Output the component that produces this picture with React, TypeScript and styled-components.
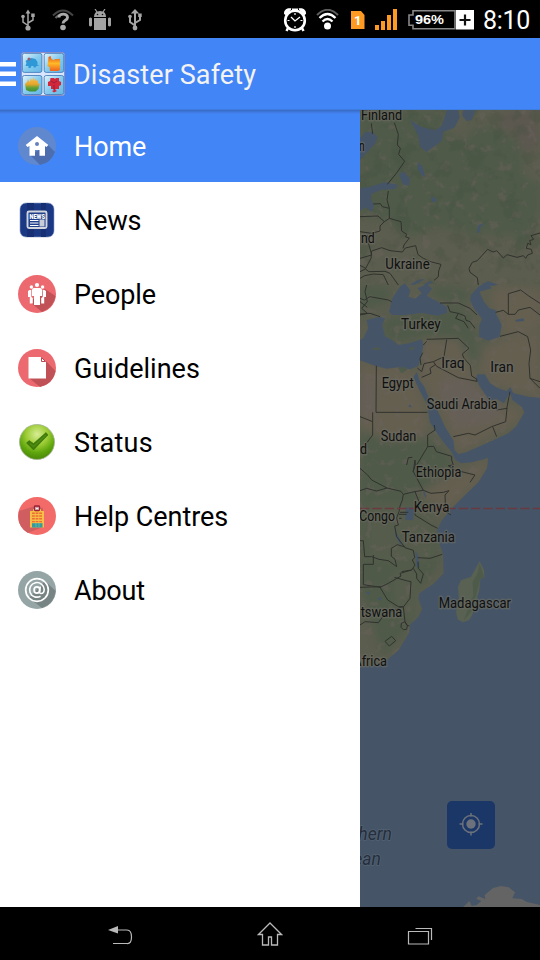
import React from "react";
import styled, { createGlobalStyle } from "styled-components";

const GlobalStyle = createGlobalStyle`
  * { box-sizing: border-box; }
  body { margin: 0; background: #000; font-family: Roboto, "Liberation Sans", sans-serif; }
  svg { display: block; }
`;

const Screen = styled.div`
  width: 540px;
  height: 960px;
  display: flex;
  flex-direction: column;
  overflow: hidden;
  background: #000;
`;

const StatusBar = styled.header`
  height: 38px;
  flex: none;
  display: flex;
  justify-content: space-between;
  align-items: center;
  background: #000;
`;

const StatusGroup = styled.div<{ $left?: number; $right?: number }>`
  display: flex;
  align-items: center;
  padding-top: 1px;
  padding-left: ${(p) => p.$left ?? 0}px;
  padding-right: ${(p) => p.$right ?? 0}px;
`;

const StatusIcon = styled.svg<{ $gap?: number }>`
  flex: none;
  margin-left: ${(p) => p.$gap ?? 0}px;
`;

const Clock = styled.span`
  width: 47px;
  margin-left: 9px;
  padding-top: 2px;
  font-size: 25px;
  line-height: 35px;
  letter-spacing: -0.3px;
  color: #fff;
  white-space: nowrap;
`;

const AppBar = styled.div`
  height: 72px;
  flex: none;
  display: flex;
  align-items: center;
  background: #4285f6;
  border-bottom: 1px solid #3f7ce0;
`;

const Title = styled.h1`
  margin: 2px 0 0 8px;
  font-size: 27px;
  line-height: 32px;
  font-weight: 400;
  letter-spacing: 0.1px;
  color: #f3f3f3;
  white-space: nowrap;
`;

const Body = styled.main`
  height: 797px;
  flex: none;
  display: flex;
`;

const Drawer = styled.nav`
  width: 360px;
  flex: none;
  display: flex;
  flex-direction: column;
  gap: 2px;
  background: #fff;
`;

const DrawerItem = styled.a<{ $active?: boolean }>`
  height: 72px;
  display: flex;
  align-items: center;
  gap: 18px;
  padding-left: 18px;
  background: ${(p) => (p.$active ? "linear-gradient(#3568c0 0, #4079dd 2px, #4285f6 4px)" : "#fff")};
  color: ${(p) => (p.$active ? "#fff" : "#000")};
`;

const ItemLabel = styled.span<{ $spacing?: number }>`
  padding-top: 1px;
  font-size: 27px;
  line-height: 34px;
  letter-spacing: ${(p) => p.$spacing ?? -0.1}px;
  white-space: nowrap;
`;

const MapPane = styled.section`
  position: relative;
  width: 180px;
  overflow: hidden;
  background: #455567;
`;

const LocateButton = styled.button`
  position: absolute;
  left: 87px;
  top: 691px;
  width: 48px;
  height: 48px;
  padding: 0;
  display: grid;
  place-items: center;
  border: 0;
  border-radius: 5px;
  background: #1b3768;
`;

const NavBar = styled.footer`
  height: 53px;
  flex: none;
  display: flex;
  align-items: center;
  justify-content: space-between;
  padding: 0 107px;
  background: #000;
`;

const Usb = ({ gap, big }: { gap?: number; big?: boolean }) => (
  <StatusIcon $gap={gap} width="14" height="22" viewBox="0 0 14 22" fill="none" stroke="#a5a5a5" strokeWidth={big ? 2 : 1.5}>
    <path d="M7 3V18M7 16.500 2 13V7.500M7 14l5-3V6.500" />
    <path d={big ? "M7 0 2.800 4.500h8.400z" : "M7 .500 4.500 4.500h5z"} fill="#a5a5a5" stroke="none" />
    <circle cx="7" cy="19" r={big ? 2.4 : 2.6} fill="#a5a5a5" stroke="none" />
    <circle cx="2" cy="7.500" r="1.800" fill="#a5a5a5" stroke="none" />
    <path d="M10.200 4.500h3.500v3.500h-3.500z" fill="#a5a5a5" stroke="none" />
  </StatusIcon>
);

const WifiUnknown = () => (
  <StatusIcon $gap={17} width="22" height="22" viewBox="0 0 22 22" fill="none">
    <path d="M1 6.500Q11-3.500 21 6.500" stroke="#454545" strokeWidth="2" />
    <path d="M3.500 9Q6 6 8.500 5.500" stroke="#666" strokeWidth="2" />
    <path d="M7 8.500c0-4.500 8.500-4.500 8.500 0 0 3-4.500 2.500-4.500 6" stroke="#aaa" strokeWidth="2.900" />
    <circle cx="11" cy="18.500" r="2.800" fill="#aaa" />
  </StatusIcon>
);

const AndroidIcon = () => (
  <StatusIcon $gap={15} width="22" height="22" viewBox="0 0 22 22" fill="#a3a3a3">
    <path d="M5 8q0-6 6-6t6 6z" />
    <path d="m6 0 2 3M16 0l-2 3" stroke="#a3a3a3" strokeWidth="1.200" />
    <path d="M5 9h12v12H5zM0 9.500q1.500-2 3 0v7q-1.500 2-3 0zM19 9.500q1.500-2 3 0v7q-1.500 2-3 0z" />
    <circle cx="8.500" cy="5.500" r=".8" fill="#111" />
    <circle cx="13.500" cy="5.500" r=".8" fill="#111" />
  </StatusIcon>
);

const AlarmIcon = () => (
  <StatusIcon width="24" height="24" viewBox="0 0 24 24" fill="none" stroke="#fff">
    <circle cx="12" cy="12.500" r="9.800" strokeWidth="2.600" />
    <path d="M1.500 6Q1 0 8 .800L3 7zM22.500 6Q23 0 16 .800L21 7z" fill="#fff" />
    <path d="m5 20-1.500 3M19 20l1.500 3M9 1.800h6" strokeWidth="2.500" />
    <path d="m8 9 4 4 5-4" strokeWidth="1.300" />
    <path d="M12 5v2M12 18v2M4.500 12.500h2M17.500 12.500h2" strokeWidth="1.200" />
  </StatusIcon>
);

const WifiIcon = () => (
  <StatusIcon $gap={9} width="23" height="22" viewBox="0 0 23 22" fill="none" stroke="#fff">
    <path d="M1 6Q11.500-4.500 22 6" stroke="#5d5d5d" strokeWidth="2" />
    <path d="M3.500 9Q11.500 1 19.500 9" strokeWidth="2.300" />
    <path d="M6.500 12.500Q11.500 7.500 16.500 12.500" strokeWidth="2.300" />
    <circle cx="11.500" cy="17" r="3.500" fill="#fff" stroke="none" />
  </StatusIcon>
);

const SimIcon = () => (
  <StatusIcon $gap={12} width="14" height="18" viewBox="0 0 14 18">
    <path d="M0 0h10l3.500 4v14H0z" fill="#fe9a24" />
    <text x="6.700" y="13.500" textAnchor="middle" fontSize="13" fontWeight="700" fontFamily="Roboto" fill="#fff">1</text>
  </StatusIcon>
);

const SignalIcon = () => (
  <StatusIcon $gap={10} width="23" height="21" viewBox="0 0 23 21" fill="#fe9a24">
    <path d="M0 16h4v5H0zM6 12h4v9H6zM12 6h4v15h-4zM18 0h4v21h-4z" />
  </StatusIcon>
);

const BatteryIcon = () => (
  <StatusIcon $gap={10} width="66" height="20" viewBox="0 0 66 20">
    <path d="M5 .800h42v18H5v-3.500H1V5h4z" fill="#000" stroke="#888" strokeWidth="1.600" />
    <path d="M48 0h18v19.500H48z" fill="#fff" />
    <path d="M57 4.500v11M51.500 10h11" stroke="#111" strokeWidth="2.200" />
    <text x="7" y="14" fontFamily="Liberation Sans" fontSize="13" fontWeight="700" textLength="29" lengthAdjust="spacingAndGlyphs" fill="#fff">96%</text>
  </StatusIcon>
);

const MenuIcon = () => (
  <svg width="16" height="26" viewBox="0 0 16 26" fill="#fff">
    <path d="M0 1h16v4.500H0zM0 10.500h16V15H0zM0 20.500h16V25H0z" />
  </svg>
);

const AppLogo = styled.svg`
  margin: 0 0 0 5px;
  flex: none;
`;

const Logo = () => (
  <AppLogo width="44" height="44" viewBox="0 0 44 44">
    <defs>
      <linearGradient id="tile" x1="0" y1="0" x2="1" y2="1">
        <stop offset="0" stopColor="#e2f4fa" />
        <stop offset=".5" stopColor="#87cbed" />
        <stop offset="1" stopColor="#63b6e5" />
      </linearGradient>
      <linearGradient id="grass" x1="0" y1="0" x2="0" y2="1">
        <stop offset="0" stopColor="#f2c35b" />
        <stop offset=".5" stopColor="#e8a52b" />
        <stop offset=".75" stopColor="#5da037" />
        <stop offset="1" stopColor="#3f9139" />
      </linearGradient>
      <linearGradient id="fire" x1="0" y1="0" x2="0" y2="1">
        <stop offset="0" stopColor="#e4521c" />
        <stop offset=".5" stopColor="#ffb928" />
        <stop offset="1" stopColor="#ef6320" />
      </linearGradient>
    </defs>
    <rect x=".5" y=".5" width="43" height="43" rx="2.500" fill="#d9e6fb" stroke="#8d8fc4" />
    <g fill="url(#tile)" stroke="#3d74b8" strokeWidth=".8">
      <rect x="1.400" y="1.400" width="19.500" height="19" rx="2" />
      <rect x="23.200" y="1.400" width="19.500" height="19" rx="2" />
      <rect x="1.400" y="23.500" width="19.500" height="19" rx="2" />
      <rect x="23.200" y="23.500" width="19.500" height="19" rx="2" />
    </g>
    <path d="m4.500 14 1-3-1-2 3-2 3-1 4 1 2 3v3l2 1h-3l-1 1.500h-2V14h-2l-1 2H7.500v-2z" fill="#2f98d6" />
    <circle cx="8" cy="7" r="1.500" fill="#a45870" />
    <path d="m27 10 .5-5 2-1 1 3 2 1 2-1h4l.5-1v12l-2 1h-8l-.5-4-2-1z" fill="url(#fire)" />
    <path d="m4 32 2-2 1-3 1.500 3L10 26l1 3 2-4v4l2-3v3l2-1v3l1.500 1-1 5-3 2.500h-6L5 38z" fill="url(#grass)" />
    <path d="m27 30 2-1 .5-3H33l1 1 1-1h3v3l2 1v3l-2 1v3h-3.500v1l1.500 1-3 1.500-2-1.500 2-1-.5-1H30v-3h-3z" fill="#d2263b" />
    <path d="m30 29 3 2 3-2M33 33v5" stroke="#861b38" strokeWidth=".8" fill="none" />
  </AppLogo>
);

const HomeBadge = () => (
  <svg width="38" height="38" viewBox="0 0 38 38">
    <circle cx="19" cy="19" r="19" fill="#6088cf" />
    <path d="M30 18 37 25Q33 36 22 38L12 28z" fill="#4c6eaf" />
    <path d="m19 9 11.300 9-1.800 2-1.500-1v9.700h-5.500V23h-4.500v5.700h-5.500V19L9.500 20l-1.800-2z" fill="#fff" />
    <circle cx="19" cy="17" r="2" fill="#6382bc" />
  </svg>
);

const NewsBadge = () => (
  <svg width="38" height="38" viewBox="0 0 38 38">
    <rect x="2" y="2" width="34" height="34" rx="6" fill="#1b3885" stroke="#8a9ac0" strokeWidth=".6" />
    <path d="M9 2h7v34H9zM23 2h5v34h-5z" fill="#173074" />
    <rect x="9.500" y="10.500" width="19" height="16.500" rx="1.500" fill="#213f8b" stroke="#d2d5dc" strokeWidth="1.900" />
    <text x="11.500" y="17.500" fontSize="6.500" fontWeight="900" fontFamily="Roboto" textLength="15.500" lengthAdjust="spacingAndGlyphs" fill="#fff">NEWS</text>
    <path d="M12 19.500h8.500M12 22h8.500M12 24.500h8.500" stroke="#fff" strokeWidth="1.100" />
    <path d="M21.500 18.500h5v7h-5z" fill="#c8ccd6" />
  </svg>
);

const PeopleBadge = () => (
  <svg width="38" height="38" viewBox="0 0 38 38">
    <circle cx="19" cy="19" r="19" fill="#ed6970" />
    <path d="M27 14 37.500 21Q36 32 24 37L12 27z" fill="#c05257" />
    <g fill="#fff">
      <circle cx="19" cy="10" r="2.100" />
      <circle cx="13.400" cy="12" r="1.700" />
      <circle cx="24.600" cy="12" r="1.700" />
      <path d="M16 13h6q2 0 2 2v6h-2v9h-6v-9h-2v-6q0-2 2-2z" />
      <path d="M11.500 15h1.800V22l1.500 1v5.500h-3V22H10v-6zM26.500 15h-1.800V22l-1.500 1v5.500h3V22H28v-6z" />
    </g>
  </svg>
);

const GuidelinesBadge = () => (
  <svg width="38" height="38" viewBox="0 0 38 38">
    <circle cx="19" cy="19" r="19" fill="#ed6970" />
    <path d="m28 12 9.500 10Q35 35 22 38L11 29z" fill="#c05257" />
    <path d="M10.500 8H23l5 5v16.500H10.500z" fill="#fff" />
    <path d="M23.500 8.500v4h4z" fill="#fff" stroke="#b9484f" strokeWidth="1" />
  </svg>
);

const StatusBadge = () => (
  <svg width="38" height="38" viewBox="0 0 38 38">
    <defs>
      <radialGradient id="glossy" cx=".5" cy=".28" r=".7">
        <stop offset="0" stopColor="#d7ed94" />
        <stop offset=".45" stopColor="#9bcb34" />
        <stop offset=".75" stopColor="#5fa60d" />
        <stop offset="1" stopColor="#4c8b08" />
      </radialGradient>
    </defs>
    <circle cx="19" cy="19" r="17.500" fill="url(#glossy)" stroke="#a3b295" strokeWidth=".8" />
    <path d="m8.500 20 2.500-2.500 4.500 3L28 9.500l2 2.500-14.500 15z" fill="#3f7b0a" stroke="#346b08" strokeWidth=".5" />
    <path d="m12 20.500 3.500 3L28 12" fill="none" stroke="#4f8c13" strokeWidth="1.500" />
  </svg>
);

const HelpBadge = () => (
  <svg width="38" height="38" viewBox="0 0 38 38">
    <circle cx="19" cy="19" r="19" fill="#f36b69" />
    <path d="M17 9 1 14Q-2 29 10 36L25 30V11z" fill="#d05e60" />
    <path d="M12 14h3v-2h8v2h3v16.500H12z" fill="#f5bf45" />
    <path d="M14 16.200h10M14 19h10M14 21.800h10M14 24.600h10" stroke="#ee6c35" strokeWidth="1.400" strokeDasharray="2.800 .8" />
    <path d="M14 26.200h10.500v4.300H14z" fill="#319b9d" />
    <path d="M18 26v4M21 26v4" stroke="#79b8a6" strokeWidth=".8" />
    <rect x="16.500" y="9" width="5" height="4.600" rx=".8" fill="#b48286" stroke="#9f2133" strokeWidth="1.300" />
    <path d="M18 10.300v2.400M20 10.300v2.400M18 11.500h2" stroke="#fff" strokeWidth=".8" />
  </svg>
);

const AboutBadge = () => (
  <svg width="38" height="38" viewBox="0 0 38 38">
    <circle cx="19" cy="19" r="19" fill="#95a5a6" />
    <path d="m27 10 10.700 10Q36 33 24 37L11 27z" fill="#778484" />
    <circle cx="19" cy="19" r="11.300" fill="none" stroke="#fff" strokeWidth="1.700" />
    <path d="M22.500 25.200A7.300 7.300 0 1 1 26.200 18.500q-.3 4-3 4-2 0-1.600-2.500l.7-4.500" fill="none" stroke="#fff" strokeWidth="1.600" />
    <ellipse cx="18.900" cy="19" rx="2.800" ry="3.200" fill="none" stroke="#fff" strokeWidth="1.700" />
  </svg>
);

const LAND =
  "M15 15H555V878L520 875 475 864 466 845 455 858 430 850 405 835 390 808 367 808 363 820 373 842 392 870 403 888 425 882 447 895 464 864 472 885 500 905 508 922 484 964 460 985 415 1006 335 1041 310 1048 298 1035 296 1007 270 965 247 915 222 880 207 843 193 825 186 800 175 816 190 850 217 900 224 950 244 982 268 1015 289 1040 302 1065 318 1075 352 1072 400 1059 396 1090 370 1132 330 1170 288 1212 260 1247 246 1277 251 1310 264 1348 266 1405 235 1437 193 1465 190 1480 201 1512 190 1535 164 1560 163 1582 131 1635 96 1665 60 1681 15 1686Z";

const WATER = [
  "M165 45 200 66 240 76 260 62 275 15H310L314 38 298 68 265 80 260 108 230 130 215 141 195 125 190 92Z",
  "M325 15H362L350 45 335 48 322 33Z",
  "M15 100 30 82 50 80 68 95 62 114 40 138 15 165Z",
  "M132 207 145 200 165 220 162 243 143 238Z",
  "M188 172 202 183 211 216 199 211 188 191Z",
  "M15 250 45 245 90 232 128 239 122 252 80 254 50 266 47 282 58 300 50 320 32 307 15 318Z",
  "M228 275 242 278 244 291 232 291Z",
  "M365 384 370 360 391 354 376 366 374 382Z",
  "M102 620 112 580 136 544 150 535 166 556 160 575 180 581 200 565 188 550 217 538 231 551 215 572 241 586 276 606 276 624 248 632 200 624 151 630 111 630Z",
  "M165 539 190 524 210 522 179 539ZM206 538 225 528 236 532 214 542Z",
  "M348 569 370 545 395 532 410 550 373 560 387 590 402 609 422 616 424 629 440 659 434 695 400 707 372 695 373 661 381 642 360 615 345 585Z",
  "M15 705 25 700 40 669 35 645 75 635 90 640 82 660 90 694 111 705 130 720 162 715 200 703 205 720 200 751 190 783 165 793 130 787 95 791 60 782 15 766Z",
  "M153 1207 178 1208 174 1246 150 1244Z",
  "M120 1265 125 1285 141 1315 136 1319 120 1290ZM181 1338 189 1350 194 1387 184 1386Z",
  "M205 1152 214 1172 212 1180 205 1165ZM32 1460 46 1462 40 1471ZM66 1480 81 1477 76 1488Z",
  "M480 645 505 640 508 648 484 650ZM382 536 400 529 430 539 410 543Z",
  "M430 1048h8v4h-8ZM160 905l5-8 5 10Z",
];

const GREEN = [
  "M15 15H255L262 75 330 110 350 72 400 65 455 85 500 130 505 210 555 240V310L500 440 475 385 430 395 400 380 350 397 310 370 240 368 160 395 110 350 15 330Z",
  "M15 540 100 545 110 565 90 600 50 600 35 640 15 620Z",
  "M80 645 160 625 230 630 310 605 355 635 345 700 300 705 220 695 120 715 90 690Z",
  "M235 540 340 550 350 575 310 600 230 576Z",
  "M310 665 365 685 430 700 410 724 350 700 375 740 360 782 325 730Z",
  "M15 980 130 1010 220 1000 300 1065 230 1140 180 1210 245 1260 255 1380 190 1460 190 1530 85 1660 50 1550 15 1450Z",
];

const SAND = [
  "M15 766 60 782 130 787 180 805 223 950 200 1000 100 1010 15 970Z",
  "M205 700 310 700 340 770 365 830 400 890 505 915 490 950 310 1045 240 895 195 830Z",
  "M395 715 520 690 555 680V875L475 860 400 830 370 790Z",
  "M420 545 555 555V670L490 690 435 690 440 630 405 595Z",
  "M260 1130 398 1060 390 1110 290 1210 240 1220 190 1160Z",
];

const BORDERS = [
  "M118 53 130 88 127 120 136 130 131 148 149 169 124 205 97 238M49 55 53 87",
  "M100 258 96 285 103 310 103 340 138 350 140 378 155 388 152 396 163 399 147 420 144 430",
  "M55 297 76 296 82 305 103 310M15 335 69 333 88 350 103 340M88 350 75 363 75 378 50 385 15 380M15 460 50 450 42 420 35 405 38 390",
  "M50 438 80 428 105 437 142 441 151 429 182 422 189 449 205 460 230 471 258 478 251 498 250 515 237 526M50 438 48 460 31 492 42 500 90 499 105 505 130 540M31 492 15 500M15 520 29 512 55 507 85 509 100 540M15 481 32 490",
  "M370 540 367 518 345 502 342 490 352 472 367 467 398 433 414 441 425 437 445 459 456 449 486 457 505 452 512 460 518 450 532 445 529 433 514 430 518 415 528 419 524 407 536 403 528 392 555 384",
  "M15 580 28 585 45 575 100 585 110 590M35 540 30 560 37 590 20 610 37 625 15 630M15 627 45 625 75 635M37 607 15 590",
  "M255 594 310 594 345 610 366 630M278 601 285 620 310 625 302 640 327 650 340 670M310 625 330 633 333 646 345 650 360 670",
  "M460 628 460 566 497 555 520 572 555 595M422 622 445 616 460 628 480 628 490 615 525 607 555 630M435 694 490 680 518 695 527 735 522 775 525 820 555 830M525 820 555 850",
  "M215 703 310 700 342 730 322 747 327 760 346 781 350 813 365 822 366 830M275 704 267 755 235 770 207 776 200 800 187 789M235 770 245 784 310 818 366 829M205 720 215 709M203 743 195 760 198 780M200 817 228 805 225 790 242 778",
  "M64 782 63 922H217M53 922V950L15 935M53 950 53 990 34 1015M295 995 340 985 360 990 410 965 452 950 456 910 425 915M413 965 425 995M455 912 462 875 465 860",
  "M185 1080 218 1025 236 1024 244 1040 290 1054 290 1065M218 1025 218 990 240 975 238 960M155 1080 160 1058 172 1057",
  "M15 1090 38 1110 50 1125 96 1149 138 1159 145 1168 178 1160 205 1156 175 1100 180 1065M15 1157 35 1150 65 1158 96 1149M180 1065 181 1080 174 1100M205 1156 228 1165 265 1162 282 1157",
  "M290 1065 295 1080 280 1082M280 1082 300 1095 360 1110 345 1132",
  "M282 1157 270 1170 272 1220 288 1230M180 1160 192 1190 180 1215 180 1230 228 1260 248 1270M145 1168 142 1185 135 1203 132 1220 125 1239 130 1260 119 1263M132 1228H155M135 1222H160M132 1240H140",
  "M119 1263 125 1295 150 1328 175 1336 179 1358 172 1365 180 1380 170 1395 140 1400",
  "M15 1307H25L29 1355H50L72 1363 100 1367 125 1385 120 1363 109 1354V1330L127 1319 150 1326M25 1378V1439L77 1447M25 1378H55V1350",
  "M188 1358 225 1360 262 1348M175 1390 185 1407V1420L197 1435 205 1407 190 1390 189 1370M170 1395 135 1405 138 1413 100 1435 75 1447M15 1447 77 1445M75 1447 98 1485 130 1505 145 1506 165 1480 168 1430 158 1428 118 1417M145 1506 150 1550 155 1560 163 1563M15 1560 30 1550 70 1553 85 1533 108 1520 143 1504",
  "M139 1555 150 1550 157 1562 155 1573 145 1574 138 1567ZM90 1609 110 1594 122 1607 103 1623Z",
];

interface MapLabel {
  text: string;
  x: number;
  y: number;
  w: number;
}

const LABELS: MapLabel[] = [
  { text: "Finland", x: 18, y: 45, w: 123 },
  { text: "n", x: 12, y: 137, w: 17 },
  { text: "nd", x: 18, y: 414, w: 41 },
  { text: "Ukraine", x: 91, y: 492, w: 133 },
  { text: "Turkey", x: 138, y: 672, w: 119 },
  { text: "Iraq", x: 259, y: 789, w: 70 },
  { text: "Iran", x: 406, y: 801, w: 70 },
  { text: "Egypt", x: 80, y: 848, w: 96 },
  { text: "Saudi Arabia", x: 215, y: 911, w: 213 },
  { text: "Sudan", x: 77, y: 1007, w: 107 },
  { text: "d", x: 15, y: 1046, w: 21 },
  { text: "Ethiopia", x: 182, y: 1116, w: 137 },
  { text: "Kenya", x: 176, y: 1220, w: 107 },
  { text: "Congo", x: 13, y: 1248, w: 107 },
  { text: "Tanzania", x: 140, y: 1311, w: 160 },
  { text: "Madagascar", x: 251, y: 1509, w: 217 },
  { text: "tswana", x: 17, y: 1536, w: 125 },
  { text: "Africa", x: -5, y: 1682, w: 101 },
];

/* Map units are a third of a pixel; the pane shows x 15..555 and y 15..2406. */
const RegionMap = () => (
  <svg width="180" height="797" viewBox="15 15 540 2391">
    <defs>
      <clipPath id="landClip"><path d={LAND} /></clipPath>
      <filter id="soft" x="-20%" y="-20%" width="140%" height="140%" colorInterpolationFilters="sRGB">
        <feGaussianBlur stdDeviation="12" />
      </filter>
      <filter id="terrain" x="0" y="0" width="100%" height="100%" colorInterpolationFilters="sRGB">
        <feTurbulence type="fractalNoise" baseFrequency=".035" numOctaves="4" seed="8" />
        <feColorMatrix values="0 0 0 0 .42  0 0 0 0 .39  0 0 0 0 .37  7 0 0 0 -4.100" />
      </filter>
      <filter id="forest" x="0" y="0" width="100%" height="100%" colorInterpolationFilters="sRGB">
        <feTurbulence type="fractalNoise" baseFrequency=".018" numOctaves="4" seed="21" />
        <feColorMatrix values="0 0 0 0 .25  0 0 0 0 .31  0 0 0 0 .24  6 0 0 0 -3.200" />
      </filter>
      <filter id="shade" x="-5%" y="-5%" width="110%" height="110%"><feGaussianBlur stdDeviation="2" /></filter>
    </defs>
    <path d={LAND} fill="#5b5d4e" />
    <g clipPath="url(#landClip)">
      <g filter="url(#soft)">
        {GREEN.map((d) => <path key={d} d={d} fill="#4f5a49" />)}
        {SAND.map((d) => <path key={d} d={d} fill="#655f50" />)}
        <path d="M440 15H555V130L505 140 480 90 430 60Z" fill="#5c5850" />
        <path d="M15 820 60 825V940L15 930ZM270 815 345 830 445 910 420 950 310 970 250 860Z" fill="#665f58" />
        <path d="M60 1190H235V1370H40V1190ZM110 1390H190V1540H120Z" fill="#555c4b" />
      </g>
      <rect x="15" y="15" width="540" height="1680" filter="url(#terrain)" opacity=".4" />
      <rect x="15" y="15" width="540" height="520" filter="url(#forest)" opacity=".28" />
    </g>
    <path d="M374 1369 387 1395 388 1416 376 1423 373 1455 352 1530 342 1546 323 1552 308 1543 303 1520 312 1489 309 1445 318 1426 348 1415Z" fill="#586152" />
    <path d="m374 1375-6 30-15 25 2 40-28 75 24-28 24-93 12-8Z" fill="#4e5b4b" />
    {WATER.map((d) => <path key={d} d={d} fill="#455567" />)}
    <path d="M55 728h20v6H55ZM162 730l18-5-4 8-12 3ZM130 790l20-5 7 9-18 11Z" fill="#4e5a4a" />
    <path d="M325 2406 343 2388 350 2403 365 2400 379 2388 364 2382 370 2374 391 2382 389 2370 414 2349 438 2343 461 2347 480 2362 472 2380 500 2382 516 2391 555 2400V2406Z" fill="#646464" />
    <g fill="none" stroke="#30322e" strokeWidth="3" strokeLinejoin="round">
      {BORDERS.map((d) => <path key={d} d={d} />)}
    </g>
    <path d="M15 1210.500H555" stroke="#693a40" strokeWidth="5" strokeDasharray="28 9" />
    <g fontFamily="Roboto" fontSize="46" fill="none" stroke="#75756c" strokeOpacity=".5" strokeWidth="9" strokeLinejoin="round" filter="url(#shade)" aria-hidden="true" />
    <g fontFamily="Roboto" fontSize="46" fill="#101010" stroke="#6b6b62" strokeOpacity=".6" strokeWidth="9" strokeLinejoin="round" paintOrder="stroke">
      {LABELS.map((l) => (
        <text key={l.text} x={l.x} y={l.y} textLength={l.w} lengthAdjust="spacingAndGlyphs">{l.text}</text>
      ))}
    </g>
    <g fontFamily="Roboto" fontSize="56" fontStyle="italic" fill="#252e3a" stroke="#526174" strokeWidth="5" paintOrder="stroke">
      <text x="10" y="2206" textLength="101" lengthAdjust="spacingAndGlyphs">hern</text>
      <text x="-5" y="2280" textLength="83" lengthAdjust="spacingAndGlyphs">ean</text>
    </g>
  </svg>
);

const items = [
  { label: "Home", Icon: HomeBadge },
  { label: "News", Icon: NewsBadge },
  { label: "People", Icon: PeopleBadge },
  { label: "Guidelines", Icon: GuidelinesBadge, spacing: 0.02 },
  { label: "Status", Icon: StatusBadge, spacing: 0.3 },
  { label: "Help Centres", Icon: HelpBadge, spacing: -0.05 },
  { label: "About", Icon: AboutBadge, spacing: -0.2 },
];

export default function App() {
  return (
    <Screen>
      <GlobalStyle />
      <StatusBar>
        <StatusGroup $left={21}>
          <Usb />
          <WifiUnknown />
          <AndroidIcon />
          <Usb gap={17} big />
        </StatusGroup>
        <StatusGroup $right={10}>
          <AlarmIcon />
          <WifiIcon />
          <SimIcon />
          <SignalIcon />
          <BatteryIcon />
          <Clock>8:10</Clock>
        </StatusGroup>
      </StatusBar>
      <AppBar>
        <MenuIcon />
        <Logo />
        <Title>Disaster Safety</Title>
      </AppBar>
      <Body>
        <Drawer>
          {items.map(({ label, Icon, spacing }, i) => (
            <DrawerItem key={label} $active={i === 0}>
              <Icon />
              <ItemLabel $spacing={spacing}>{label}</ItemLabel>
            </DrawerItem>
          ))}
        </Drawer>
        <MapPane>
          <RegionMap />
          <LocateButton aria-label="My location">
            <svg width="24" height="24" viewBox="0 0 24 24" fill="none" stroke="#6c717b" strokeWidth="1.500">
              <circle cx="12" cy="11" r="8.500" />
              <circle cx="12" cy="11" r="4.700" fill="#6c717b" stroke="none" />
              <path d="M12-.5v4M12 18.500v4M.5 11h4M19.500 11h4" />
            </svg>
          </LocateButton>
        </MapPane>
      </Body>
      <NavBar>
        <svg width="26" height="22" viewBox="0 0 26 22" fill="none" stroke="#bababa" strokeWidth="1.200">
          <path d="M10 7h10q4.500 0 4.500 7T20 20.500H6" />
          <path d="M1 7 11 3v7.500z" fill="#bababa" stroke="none" />
        </svg>
        <svg width="26" height="24" viewBox="0 0 26 24" fill="none" stroke="#bababa" strokeWidth="1.300">
          <path d="M13 1 24.500 12.500h-4V23h-6v-8h-3v8h-6V12.500h-4z" />
        </svg>
        <svg width="26" height="22" viewBox="0 0 26 22" fill="none" stroke="#bababa" strokeWidth="1.200">
          <path d="M1.500 8.500h20v12.500h-20zM8.500 5.500h16V17" />
        </svg>
      </NavBar>
    </Screen>
  );
}
